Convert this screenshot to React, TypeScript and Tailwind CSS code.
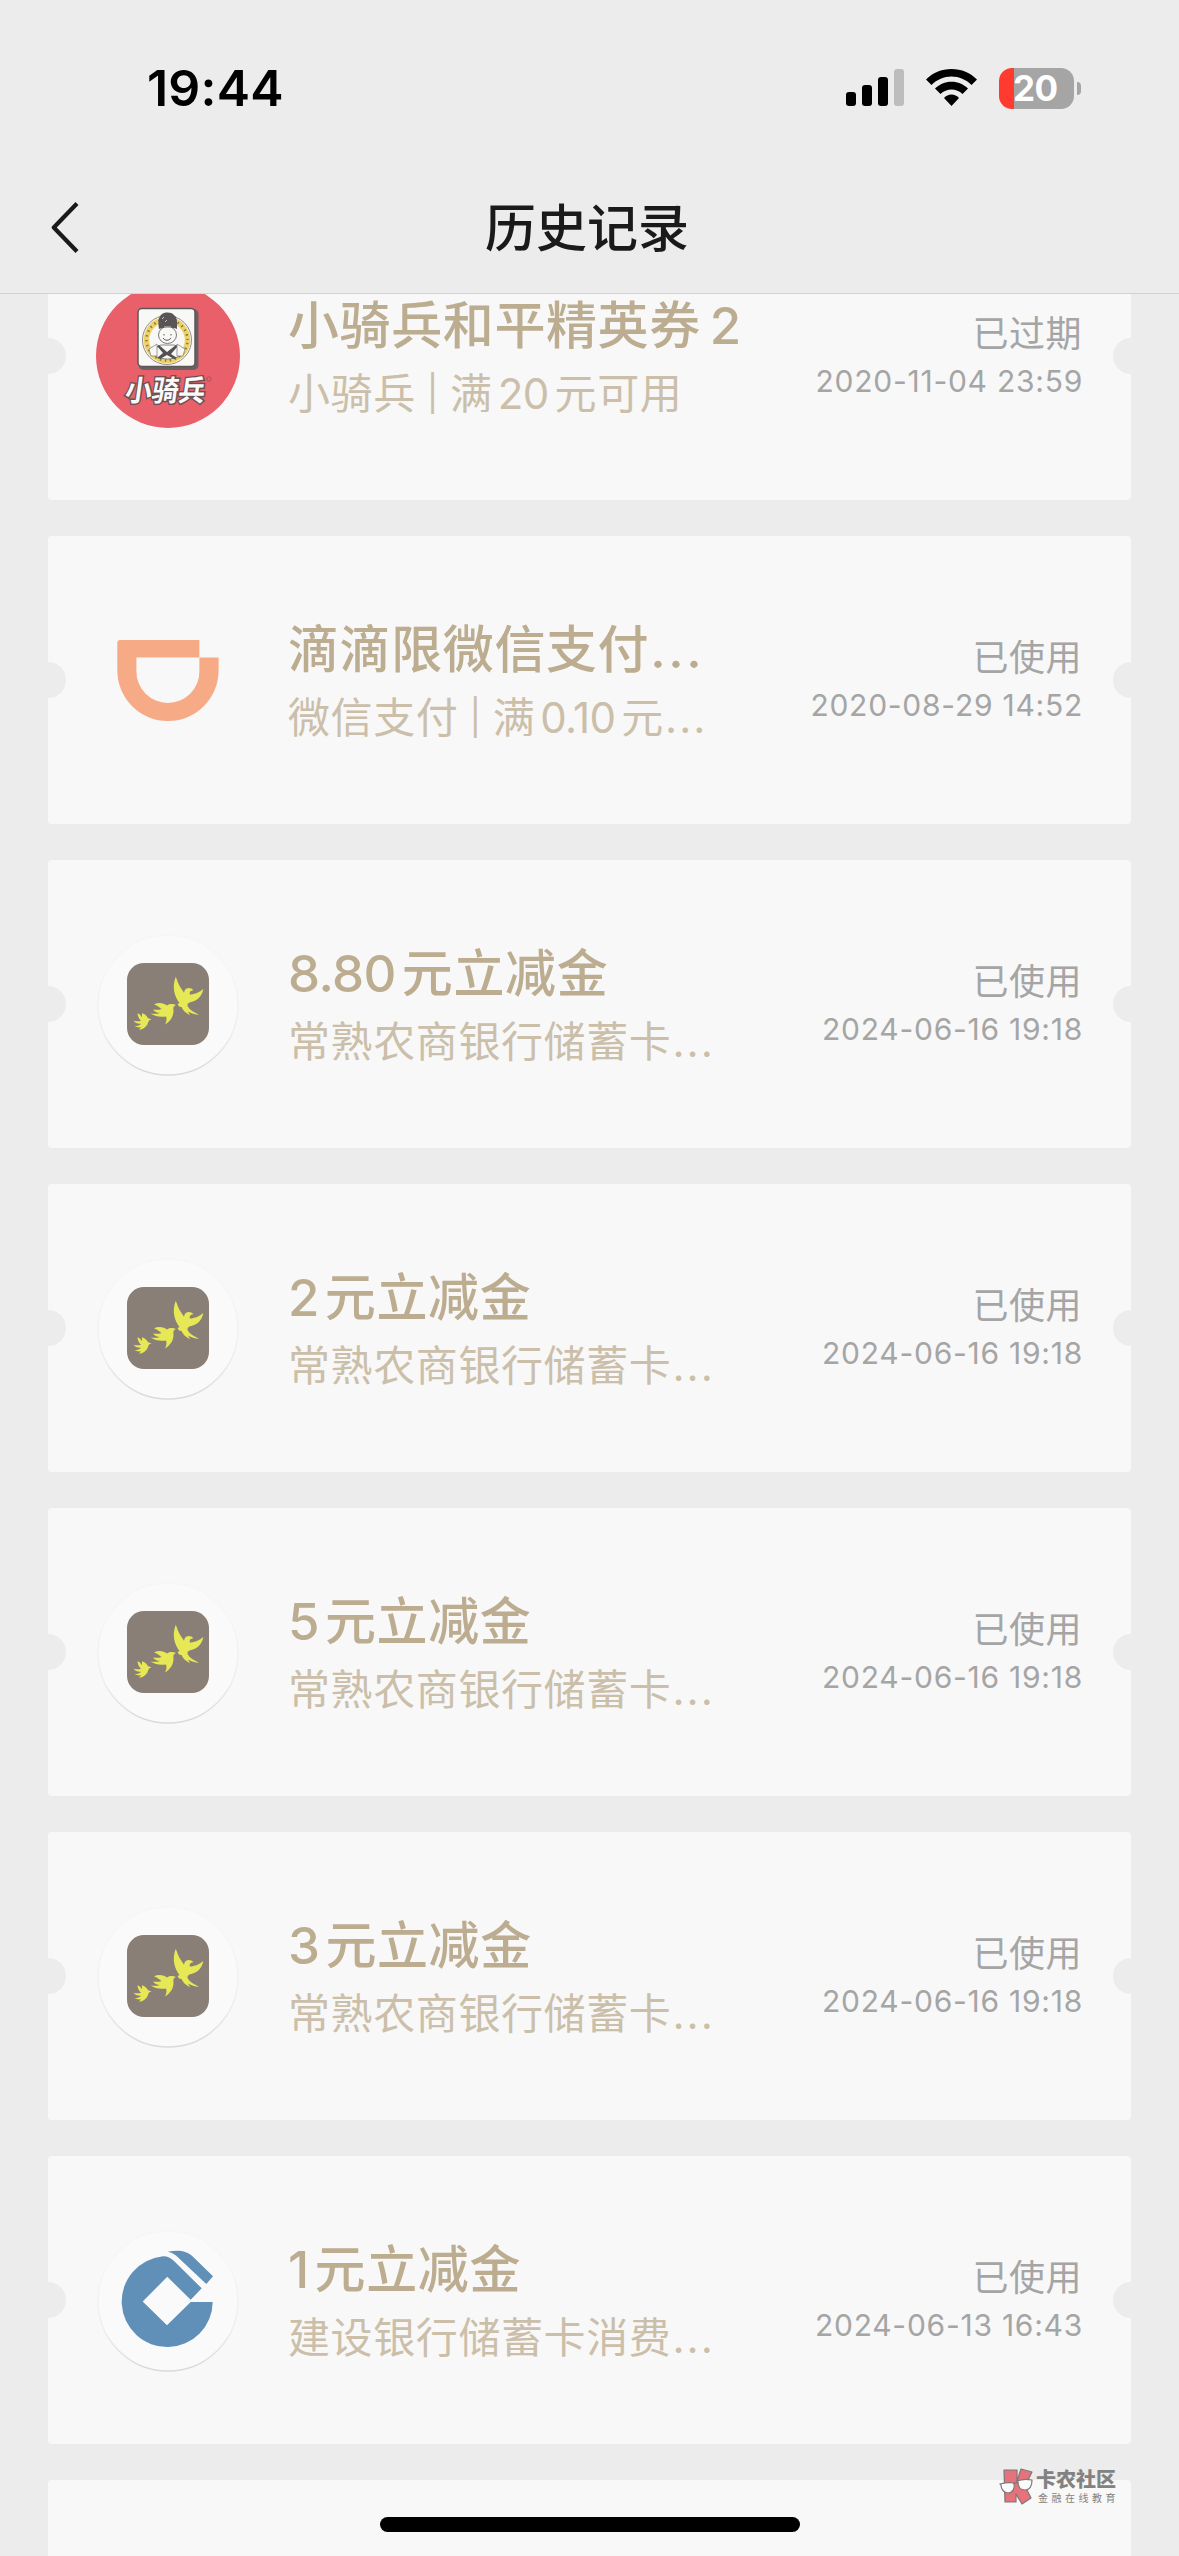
import type { ReactNode } from 'react';

type Logo = 'cavalry' | 'didi' | 'birds' | 'ccb';

interface Coupon {
  logo: Logo;
  title: string;
  desc: string;
  status: string;
  time: string;
}

const coupons: Coupon[] = [
  { logo: 'cavalry', title: '小骑兵和平精英券2', desc: '小骑兵|满20元可用', status: '已过期', time: '2020-11-04 23:59' },
  { logo: 'didi', title: '滴滴限微信支付...', desc: '微信支付|满0.10元...', status: '已使用', time: '2020-08-29 14:52' },
  { logo: 'birds', title: '8.80元立减金', desc: '常熟农商银行储蓄卡...', status: '已使用', time: '2024-06-16 19:18' },
  { logo: 'birds', title: '2元立减金', desc: '常熟农商银行储蓄卡...', status: '已使用', time: '2024-06-16 19:18' },
  { logo: 'birds', title: '5元立减金', desc: '常熟农商银行储蓄卡...', status: '已使用', time: '2024-06-16 19:18' },
  { logo: 'birds', title: '3元立减金', desc: '常熟农商银行储蓄卡...', status: '已使用', time: '2024-06-16 19:18' },
  { logo: 'ccb', title: '1元立减金', desc: '建设银行储蓄卡消费...', status: '已使用', time: '2024-06-13 16:43' },
];

// Adds a little air between digits and the Chinese text next to them.
function MixedText({ text, digits }: { text: string; digits: string }) {
  const runs = text.match(/\.\.\.|\||[\d.]+?(?=\.\.\.|[^\d.]|$)|[^\d.|]+/g) ?? [];
  return (
    <>
      {runs.map((run, i) => {
        if (run === '...') return <span key={i} className="ml-px tracking-[0.05em]">...</span>;
        if (run === '|') return <span key={i} className="relative -top-[3px] ml-[11px] mr-[11px] text-[35px]">|</span>;
        if (/^\d/.test(run)) {
          return (
            <span key={i} className={`${i > 0 ? digits : ''} mr-[6px] tracking-[-0.600px]`}>
              {run}
            </span>
          );
        }
        return <span key={i}>{run}</span>;
      })}
    </>
  );
}

function CavalryLogo() {
  return (
    <svg viewBox="0 0 144 144" className="size-[144px]">
      <circle cx="72" cy="72" r="72" fill="#e9606b" />
      <rect x="42.5" y="25" width="60" height="61" rx="5" fill="#6b5f61" />
      <rect x="42" y="24.500" width="57" height="58" rx="4" fill="#f8f8f6" stroke="#5d5657" strokeWidth="1.500" />
      <circle cx="71" cy="56" r="24.500" fill="none" stroke="#77706a" strokeWidth="0.800" />
      <circle cx="71" cy="56" r="20.500" fill="none" stroke="#efd267" strokeWidth="5.500" />
      <circle cx="71" cy="56" r="20.500" fill="none" stroke="#8a7a48" strokeWidth="2.500" strokeDasharray="1.500 3.500" pathLength="129" strokeDashoffset="2" />
      <path d="M59 72c-1-7 2-10 6-11h13c4 1 7 4 6 11-8 4-17 4-25 0z" fill="#f8f8f6" stroke="#6f6a69" strokeWidth="0.800" />
      <path d="M63 61l8 7 9-7 2 1-7 8 6 4-3 1-7-4-7 4-3-1 6-5-6-7z" fill="#555152" />
      <ellipse cx="71.500" cy="51" rx="9" ry="8.500" fill="#f8f8f6" stroke="#6f6a69" strokeWidth="0.900" />
      <path d="M68 50v1.500M75 50v1.500M67 54c2 3 6 3 8 0" fill="none" stroke="#555" strokeWidth="1" />
      <path d="M63 45c-1-7-1-12 3-15 4-2 9-2 12 1 4 3 3 8 3 14-5-2-12-2-18 0z" fill="#595556" />
      <path d="M66 35l2-2M69 38l2-2M68 43h7" stroke="#c8c6c6" strokeWidth="1" />
      <path d="M53 65l8-5v12h-6zM89 65l-8-5v12h6z" fill="#f8f8f6" stroke="#777" strokeWidth="0.700" />
      <text
        x="0"
        y="0"
        transform="translate(28 117) skewX(-8)"
        textLength="80"
        lengthAdjust="spacingAndGlyphs"
        className="font-['Noto_Sans_CJK_SC',sans-serif] text-[29px] font-bold"
        fill="#fafafa"
        stroke="#6b5054"
        strokeWidth="3"
        paintOrder="stroke"
      >
        小骑兵
      </text>
      <circle cx="113" cy="95" r="2.200" fill="none" stroke="#a54b54" strokeWidth="0.800" />
    </svg>
  );
}

function DidiLogo() {
  return (
    <svg viewBox="0 0 144 144" className="size-[144px]">
      <path
        d="M21.300 35q0-3 3-3h79.100v17.500h19.200v12.900a50.650 50.650 0 0 1-101.300 0zM40.400 49.500v14a31.500 31.500 0 0 0 63 0v-14z"
        fill="#f7aa86"
        fillRule="evenodd"
      />
    </svg>
  );
}

// White disc whose edge only shows towards the bottom.
function Disc({ id }: { id: string }) {
  return (
    <>
      <defs>
        <linearGradient id={id} x1="0" y1="0" x2="0" y2="1">
          <stop offset="0.25" stopColor="#f6f6f6" />
          <stop offset="0.7" stopColor="#efeff0" />
          <stop offset="1" stopColor="#d9dadc" />
        </linearGradient>
      </defs>
      <circle cx="72" cy="73" r="70" fill="#fafafa" stroke={`url(#${id})`} strokeWidth="1.600" />
    </>
  );
}

function BirdsLogo() {
  return (
    <svg viewBox="0 0 144 144" className="size-[144px]">
      <Disc id="disc-birds" />
      <rect x="31" y="31" width="82" height="82" rx="17" fill="#8a7f77" />
      <g fill="#e7e856">
        <path d="M79.700 44.700c1.500 3 2.500 8 6 12.500l2.300 3.500c.5-3 2-4.500 4.300-4.700 2.500 0 4 .7 5 2.200-3 .3-4 1.500-3.500 4.300 5 0 10-2.500 13.500-5.500-1 6-5 11-10.500 12.500-4.500 1-6 2.500-5 5 2 3.500 6 5.500 11.200 8.200-4 0-8-1.200-11-3.200l2 3.700c-4-2-7-4.700-8.500-8.200l-2.500-.5-1.500-2.500 2-1c-4.500-6-8-15-3.800-26.300z" />
        <path d="M58 72.200c5-2.200 10-1.200 13 1.300 3-2 6-1.800 9-.5-2.500 1-3 2.500-2.500 5.500 0 6-3 10.500-8.500 14 1.500-3 2-5.500 1-8-6 1-11.500-.5-15.500-3 4 .5 7.500.5 9.500-.5-3 0-5.500-1.300-7-3.500 3 .5 6 .5 8.500-.5-2-2-4.500-3.500-7.500-4.800z" />
        <path d="M41.500 81.300c2.500 1 3.500 2.500 4.500 4v-4c3.500 1 5 3 6 5l3.500 1c-3 1-3 2.500-4 5-2 3.500-5 5-8.500 5.500l2-2.500c-2 .3-4.500 0-6.500-1 3.500 0 5.500-1 6.500-2.500-3.500.3-6-1-7.500-3 3 .7 5.500.7 7.500 0-2-2-3.300-4.500-3.500-7.500z" />
      </g>
    </svg>
  );
}

function CcbLogo() {
  return (
    <svg viewBox="0 0 144 144" className="size-[144px]">
      <Disc id="disc-ccb" />
      <path
        d="M67 28.300A45.500 45.500 0 1 0 116.700 74H94.700L71 97.300 46.700 73.500 71.300 48.700 94.700 71.800l11-11.500L78 33q-5-5-11-4.700z"
        fill="#6090b8"
      />
      <path d="M71.700 23.700c10-1.500 18-2 26.300 6L117 48.300 110.300 56 80 27.500q-4-3-8.300-3.800z" fill="#6090b8" />
    </svg>
  );
}

const logos: Record<Logo, ReactNode> = {
  cavalry: <CavalryLogo />,
  didi: <DidiLogo />,
  birds: <BirdsLogo />,
  ccb: <CcbLogo />,
};

function CouponCard({ coupon }: { coupon: Coupon }) {
  return (
    <li className="relative flex h-[288px] shrink-0 items-center rounded-[4px] bg-[#f8f8f8] pl-[48px] pr-[49px]">
      <span className="absolute left-0 top-[126px] h-[36px] w-[18px] rounded-r-full bg-[#ececec]" />
      <span className="absolute right-0 top-[126px] h-[36px] w-[18px] rounded-l-full bg-[#ececec]" />
      <div className="size-[144px] shrink-0">{logos[coupon.logo]}</div>
      <div className="ml-[48px] flex flex-1 flex-col gap-[8px] whitespace-nowrap pt-[7px]">
        <h2 className="h-[60px] text-[51px] font-medium leading-[60px] tracking-[0.600px] text-[#bcad91]">
          <MixedText text={coupon.title} digits="ml-[9px]" />
        </h2>
        <p className="h-[60px] text-[42px] leading-[60px] tracking-[0.600px] text-[#cbbfaa]">
          <MixedText text={coupon.desc} digits="ml-[5px]" />
        </p>
      </div>
      <div className="flex flex-col items-end whitespace-nowrap pt-[2px] text-[#a5a5a5]">
        <span className="h-[50px] text-[36px] leading-[51px] tracking-[0.500px]">{coupon.status}</span>
        <span className="-mr-px h-[46px] text-[30px] leading-[45px] tracking-[0.750px]">{coupon.time}</span>
      </div>
    </li>
  );
}

function StatusBar() {
  return (
    <div className="flex h-[176px] items-center pl-[147px] pr-[98px]">
      <time className="text-[50px] font-semibold leading-[60px] tracking-[0.200px] text-black">19:44</time>
      <svg viewBox="0 0 59 38" className="ml-auto h-[38px] w-[59px]">
        <rect x="0" y="23" width="10" height="14" rx="3" />
        <rect x="16" y="16" width="10" height="21" rx="3" />
        <rect x="32" y="8" width="10" height="29" rx="3" />
        <rect x="48" y="0" width="10" height="37" rx="3" fill="#bdbdbd" />
      </svg>
      <svg viewBox="0 0 51 38" className="ml-[21px] h-[38px] w-[51px]">
        <path d="M25.500 0C35.500 0 44.500 4 51 10.500L45.500 16C40 10.500 33 7.500 25.500 7.500S11 10.500 5.500 16L0 10.500C6.500 4 15.500 0 25.500 0z" />
        <path d="M25.500 12.700c6.500 0 12 2.500 16.500 6.800l-5.500 5.500c-3-3-7-4.500-11-4.500s-8 1.500-11 4.500L9 19.500c4.500-4.300 10-6.800 16.500-6.800z" />
        <path d="M25.500 25.500c3 0 5.500 1.200 7.500 3.500l-7.500 8-7.500-8c2-2.300 4.500-3.500 7.500-3.500z" />
      </svg>
      <div className="ml-[22px] flex items-center gap-[3px]">
        <div className="flex h-[41px] w-[75px] items-center overflow-hidden rounded-[13px] bg-[linear-gradient(90deg,#ff3b30_15px,#a5a5a5_15px)] pl-[14px]">
          <span className="text-[35px] font-bold leading-[41px] tracking-[-0.500px] text-white">20</span>
        </div>
        <span className="h-[13px] w-[4px] rounded-r-full bg-[#a5a5a5]" />
      </div>
    </div>
  );
}

function Watermark() {
  return (
    <div className="absolute left-[999px] top-[2467px] flex">
      <svg viewBox="0 0 36 38" className="h-[38px] w-[36px]" stroke="#7d7779" strokeWidth="1.200" strokeLinejoin="round">
        <path d="M5 3h13v11l4-12 11 3-7 14 6 12-9 6-6-10v8H6z" fill="#e8727c" />
        <path d="M1 17c4-1 9-2 14-1 1 5-1 10-6 10-4 0-7-4-7-8zM18 14c5-2 10-2 15-1 0 6-2 10-7 10s-7-4-7-8z" fill="#fbfbfb" />
        <path d="M14 17l5-2" />
      </svg>
      <div className="ml-px flex flex-col whitespace-nowrap text-[#828282]">
        <span className="h-[24px] text-[20px] font-black leading-[26px]">卡农社区</span>
        <span className="ml-[2px] h-[14px] text-[10px] leading-[14px] tracking-[3.500px]">金融在线教育</span>
      </div>
    </div>
  );
}

export default function App() {
  return (
    <div className="relative flex h-[2556px] w-[1179px] flex-col overflow-hidden bg-[#ececec] font-['Inter','Noto_Sans_CJK_SC',sans-serif]">
      <header className="h-[294px] shrink-0 border-b border-[#d2d2d2]">
        <StatusBar />
        <div className="flex h-[102px] items-center pl-[51px] pr-[51px]">
          <svg viewBox="0 0 28 51" className="h-[51px] w-[28px]" fill="none" stroke="#1a1a1a" strokeWidth="4.200" strokeLinejoin="round">
            <path d="M26 1.500L2.800 25.500 26 49.500" />
          </svg>
          <h1 className="mr-[33px] flex-1 pt-[3px] text-center text-[51px] font-medium leading-[70px] text-[#1a1a1a]">历史记录</h1>
        </div>
      </header>
      <main className="min-h-0 flex-1 overflow-hidden">
        <ul className="-mt-[82px] flex flex-col gap-[36px] px-[48px]">
          {coupons.map((coupon, i) => (
            <CouponCard key={i} coupon={coupon} />
          ))}
          <li className="h-[288px] shrink-0 rounded-[4px] bg-[#f8f8f8]" />
        </ul>
      </main>
      <Watermark />
      <div className="absolute bottom-[24px] left-[380px] h-[15px] w-[420px] rounded-full bg-black" />
    </div>
  );
}
